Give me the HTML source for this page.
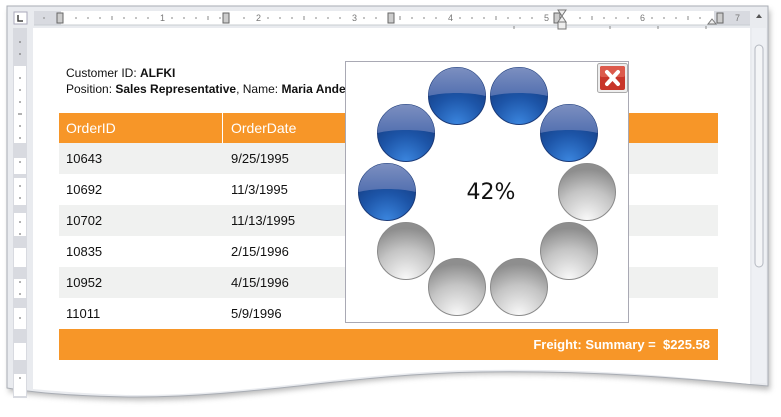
<!DOCTYPE html>
<html><head><meta charset="utf-8"><style>
*{margin:0;padding:0;box-sizing:border-box}
body{width:781px;height:417px;background:#fff;position:relative;overflow:hidden;font-family:"Liberation Sans","DejaVu Sans",sans-serif}
.a{position:absolute}
.t{font-size:13px;color:#111}
.row{position:absolute;left:59px;width:659px;height:31px;font-size:13px;color:#111}
.row span{position:absolute;top:8px}
</style></head><body>
<svg class="a" style="left:0;top:0" width="781" height="417">
<defs>
<filter id="sh" x="-5%" y="-5%" width="110%" height="120%"><feGaussianBlur stdDeviation="3"/></filter>
<radialGradient id="bl" cx="50%" cy="100%" r="80%"><stop offset="0" stop-color="#3b86df"/><stop offset="0.6" stop-color="#1d55a8"/><stop offset="1" stop-color="#153f86"/></radialGradient>
<linearGradient id="bh" x1="0" y1="0" x2="0" y2="1"><stop offset="0" stop-color="#7c8fc0"/><stop offset="1" stop-color="#5370b0"/></linearGradient>
<radialGradient id="gr" cx="50%" cy="100%" r="90%"><stop offset="0" stop-color="#fafafa"/><stop offset="0.6" stop-color="#c4c4c4"/><stop offset="1" stop-color="#8e8e8e"/></radialGradient>
</defs>
<path d="M9 10 H770 V390 C700 383 600 372 480 374 C350 376 250 402 130 400 C70 399 30 394 9 392 Z" fill="#888" filter="url(#sh)" opacity="0.6"/>
<path d="M7 6 H768 V386 C700 380 600 370 480 372 C350 374 250 398 130 397 C70 396 30 392 7 388 Z" fill="#e9ebef" stroke="#a9adb4"/>
<path d="M33 28 H750 V384 C690 378 600 368 480 370 C350 372 250 396 130 395 C90 394 55 391 33 389 Z" fill="#fff"/>
<rect x="752" y="28" width="14" height="355" fill="#eef0f4"/>
<rect x="755" y="45" width="8" height="222" rx="4" fill="#f4f5f7" stroke="#b4b8c0"/>
<path d="M756 18 L759 14 L762 18Z" fill="#555"/>
<rect x="14" y="12" width="13" height="12" fill="#fff" stroke="#aab"/>
<path d="M18 15 V21 H23" stroke="#444" stroke-width="1.5" fill="none"/>
<rect x="34" y="11" width="716" height="14" fill="#fff"/>
<rect x="34" y="11" width="27" height="14" fill="#d8dae0"/>
<rect x="714" y="11" width="36" height="14" fill="#d8dae0"/>
<line x1="34" y1="25" x2="750" y2="25" stroke="#c8ccd2"/>
<g stroke="#888">
<path d="M44 17v2M76 17v2M88 17v2M100 17v2M112 16v4M124 17v2M136 17v2M148 17v2M172 17v2M184 17v2M196 17v2M208 16v4M220 17v2M244 17v2M268 17v2M280 17v2M292 17v2M304 16v4M316 17v2M328 17v2M340 17v2M364 17v2M376 17v2M400 16v4M412 17v2M424 17v2M436 17v2M460 17v2M472 17v2M484 17v2M496 16v4M508 17v2M520 17v2M532 17v2M580 17v2M592 16v4M604 17v2M616 17v2M628 17v2M652 17v2M664 17v2M676 17v2M688 16v4M700 17v2"/>
<path d="M514 26v3M610 26v3M658 26v3M706 26v3"/>
</g>
<g font-size="9" fill="#777" font-family="Liberation Sans"><text x="160" y="21">1</text><text x="256" y="21">2</text><text x="352" y="21">3</text><text x="448" y="21">4</text><text x="544" y="21">5</text><text x="640" y="21">6</text><text x="735" y="21">7</text></g>
<g fill="#ccc" stroke="#666"><rect x="57" y="13" width="6" height="10"/><rect x="223" y="13" width="6" height="10"/><rect x="388" y="13" width="6" height="10"/><rect x="554" y="13" width="6" height="10"/><rect x="717" y="13" width="6" height="10"/></g>
<path d="M558 10h8l-4 6l4 6h-8l4-6z" fill="#eee" stroke="#777"/>
<rect x="558" y="22" width="8" height="7" fill="#eee" stroke="#777"/>
<path d="M708 24l4-5l4 5z" fill="#eee" stroke="#777"/>
<rect x="13" y="28" width="14" height="370" fill="#d8dae0"/>
<rect x="14" y="66" width="12" height="330" fill="#fff"/>
<g fill="#d8dae0"><rect x="14" y="143" width="12" height="15"/><rect x="14" y="174" width="12" height="4"/><rect x="14" y="205" width="12" height="8"/><rect x="14" y="236" width="12" height="12"/><rect x="14" y="267" width="12" height="12"/><rect x="14" y="298" width="12" height="10"/><rect x="14" y="329" width="12" height="14"/><rect x="14" y="360" width="12" height="14"/></g>
<g stroke="#666"><path d="M19 42h2M19 54h2M19 78h2M19 90h2M19 102h2M18 114h4M19 126h2M19 138h2M19 162h2M19 186h2M19 198h2M19 222h2M19 234h2M19 282h2M19 294h2M19 318h2M19 378h2"/></g>
</svg>
<div class="a t" style="left:66px;top:66px;font-size:12px">Customer ID: <b>ALFKI</b></div>
<div class="a t" style="left:66px;top:82px;font-size:12px">Position: <b>Sales Representative</b>, Name: <b>Maria Anders</b></div>
<div class="a" style="left:59px;top:113px;width:659px;height:30px;background:#f79628"></div>
<div class="a" style="left:222px;top:113px;width:1px;height:30px;background:#fff"></div>
<div class="a" style="left:66px;top:120px;color:#fff;font-size:14px">OrderID</div>
<div class="a" style="left:231px;top:120px;color:#fff;font-size:14px">OrderDate</div>
<div class="row" style="top:143px;background:#f0f1f0"><span style="left:7px">10643</span><span style="left:172px">9/25/1995</span></div>
<div class="row" style="top:174px"><span style="left:7px">10692</span><span style="left:172px">11/3/1995</span></div>
<div class="row" style="top:205px;background:#f0f1f0"><span style="left:7px">10702</span><span style="left:172px">11/13/1995</span></div>
<div class="row" style="top:236px"><span style="left:7px">10835</span><span style="left:172px">2/15/1996</span></div>
<div class="row" style="top:267px;background:#f0f1f0"><span style="left:7px">10952</span><span style="left:172px">4/15/1996</span></div>
<div class="row" style="top:298px"><span style="left:7px">11011</span><span style="left:172px">5/9/1996</span></div>
<div class="a" style="left:59px;top:329px;width:659px;height:31px;background:#f79628;color:#fff;font-weight:bold;font-size:13px;text-align:right;padding:8px 8px 0 0">Freight: Summary = &nbsp;$225.58</div>
<div class="a" style="left:345px;top:61px;width:284px;height:262px;background:#fff;border:1px solid #a9a9b4"></div>
<svg class="a" style="left:0;top:0" width="781" height="417">
<g stroke="#1b3a78" stroke-width="1">
<g id="b"></g>
</g>
<g>
<circle cx="457" cy="96" r="28.5" fill="url(#bl)" stroke="#1b3a78"/><path d="M428.5 96 A28.5 28.5 0 0 1 485.5 96 C470 92 444 92 428.5 96Z" fill="url(#bh)"/>
<circle cx="519" cy="96" r="28.5" fill="url(#bl)" stroke="#1b3a78"/><path d="M490.5 96 A28.5 28.5 0 0 1 547.5 96 C532 92 506 92 490.5 96Z" fill="url(#bh)"/>
<circle cx="406" cy="133" r="28.5" fill="url(#bl)" stroke="#1b3a78"/><path d="M377.5 133 A28.5 28.5 0 0 1 434.5 133 C419 129 393 129 377.5 133Z" fill="url(#bh)"/>
<circle cx="569" cy="133" r="28.5" fill="url(#bl)" stroke="#1b3a78"/><path d="M540.5 133 A28.5 28.5 0 0 1 597.5 133 C582 129 556 129 540.5 133Z" fill="url(#bh)"/>
<circle cx="387" cy="192" r="28.5" fill="url(#bl)" stroke="#1b3a78"/><path d="M358.5 192 A28.5 28.5 0 0 1 415.5 192 C400 188 374 188 358.5 192Z" fill="url(#bh)"/>
<circle cx="587" cy="192" r="28.5" fill="url(#gr)" stroke="#8a8a8a"/>
<circle cx="406" cy="251" r="28.5" fill="url(#gr)" stroke="#8a8a8a"/>
<circle cx="569" cy="251" r="28.5" fill="url(#gr)" stroke="#8a8a8a"/>
<circle cx="457" cy="287" r="28.5" fill="url(#gr)" stroke="#8a8a8a"/>
<circle cx="519" cy="287" r="28.5" fill="url(#gr)" stroke="#8a8a8a"/>
</g>
<rect x="597.5" y="63.5" width="30" height="29" rx="2" fill="#eee" stroke="#aaa"/>
<rect x="600" y="66" width="25" height="24" rx="2" fill="#c8352a"/>
<rect x="600" y="66" width="25" height="11" rx="2" fill="#dc5a4c"/>
<path d="M607 72 L618 84 M618 72 L607 84" stroke="#fff" stroke-width="4" stroke-linecap="round"/>
<text x="491" y="199" font-size="22" text-anchor="middle" fill="#111" font-family="DejaVu Sans">42%</text>
</svg>
</body></html>
